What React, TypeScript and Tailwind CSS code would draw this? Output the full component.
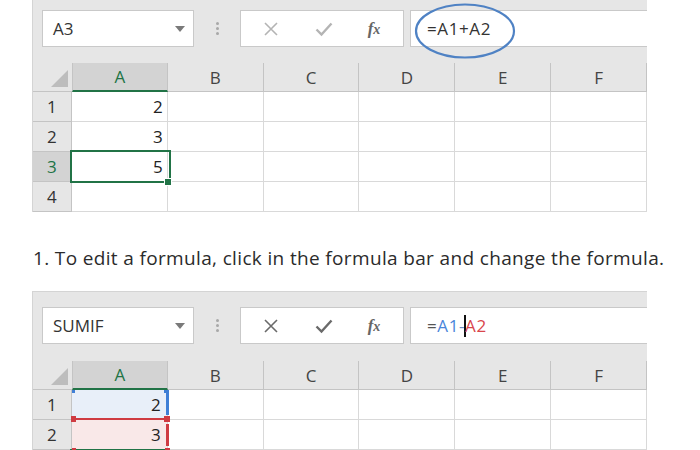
import React from "react";

const font = { fontFamily: '"Open Sans", "Noto Sans", sans-serif' };

function Toolbar({ name, active, formula }: { name: string; active: boolean; formula: React.ReactNode }) {
  const iconColor = active ? "#6a6a6a" : "#b4b4b4";
  return (
    <div className="flex h-[37px] items-stretch">
      <div className="ml-[9px] flex w-[152px] items-center justify-between border border-[#c9c9c9] bg-white pl-[10px] pr-[8px]">
        <span className="text-[17px] text-[#333]">{name}</span>
        <svg width="10" height="6" viewBox="0 0 10 6"><polygon points="0,0 10,0 5,6" fill="#7a7a7a" /></svg>
      </div>
      <div className="flex w-[46px] flex-col items-center justify-center gap-[2px]">
        <span className="h-[3px] w-[3px] rounded-full bg-[#a8a8a8]" />
        <span className="h-[3px] w-[3px] rounded-full bg-[#a8a8a8]" />
        <span className="h-[3px] w-[3px] rounded-full bg-[#a8a8a8]" />
      </div>
      <div className="flex w-[164px] items-center border border-[#c9c9c9] bg-white">
        <div className="flex w-[58px] justify-center pl-[2px]">
          <svg width="16" height="16" viewBox="0 0 16 16">
            <path d="M2 2 L14 14 M14 2 L2 14" stroke={iconColor} strokeWidth="1.6" fill="none" />
          </svg>
        </div>
        <div className="flex w-[50px] justify-center">
          <svg width="18" height="16" viewBox="0 0 18 16">
            <path d="M1.5 8.5 L6.5 13.5 L16.5 2.5" stroke={iconColor} strokeWidth="2.4" fill="none" />
          </svg>
        </div>
        <div className="flex flex-1 justify-center pr-[4px]">
          <span className="text-[17px] italic text-[#666]" style={{ fontFamily: '"Liberation Serif", "DejaVu Serif", serif', fontWeight: 700 }}>
            f<span className="text-[14px]">x</span>
          </span>
        </div>
      </div>
      <div className="relative ml-[6px] flex flex-1 items-center border-y border-l border-[#c9c9c9] bg-white pl-[16px]">
        {formula}
      </div>
    </div>
  );
}

const cols = ["A", "B", "C", "D", "E", "F"];

function HeaderRow() {
  return (
    <div className="flex h-[29px]">
      <div className="flex w-[39px] items-end justify-end border-b border-[#c4c4c4] pb-[4px] pr-[4px]">
        <svg width="17" height="17" viewBox="0 0 17 17"><polygon points="0,17 17,17 17,0" fill="#bdbdbd" /></svg>
      </div>
      {cols.map((c, i) => (
        <div
          key={c}
          className={
            i === 0
              ? "flex w-[96px] items-center justify-center border-b-2 border-b-[#217346] border-l border-l-[#c4c4c4] border-r border-r-[#c4c4c4] bg-[#d3d3d3] pt-[1px] text-[17px] text-[#217346]"
              : "flex w-[96px] items-center justify-center border-b border-b-[#c4c4c4] border-r border-r-[#c4c4c4] pt-[1px] text-[17px] text-[#444]"
          }
        >
          {c}
        </div>
      ))}
    </div>
  );
}

export default function App() {
  const rows1 = ["2", "3", "5", ""];
  return (
    <div className="relative h-[450px] w-[700px] overflow-hidden bg-white" style={font}>
      {/* Panel 1 */}
      <div className="ml-[32px] w-[615px] border-l border-[#d4d4d4] bg-[#e6e6e6] pt-[10px]">
        <Toolbar
          name="A3"
          active={false}
          formula={
            <>
              <span className="text-[17px] tracking-[0.6px] text-[#333]">=A1+A2</span>
              <svg className="pointer-events-none absolute left-[3px] top-[-9px]" width="102" height="58" viewBox="0 0 102 58">
                <ellipse cx="51" cy="29" rx="49" ry="26.5" fill="none" stroke="#4f82c4" strokeWidth="2.2" />
              </svg>
            </>
          }
        />
        <div className="mt-[16px]">
          <HeaderRow />
          {rows1.map((v, r) => (
            <div key={r} className="flex h-[30px]">
              <div
                className={
                  r === 2
                    ? "flex w-[39px] items-center justify-center border-b border-r border-[#c4c4c4] bg-[#d3d3d3] text-[17px] text-[#217346]"
                    : "flex w-[39px] items-center justify-center border-b border-r border-[#c4c4c4] text-[17px] text-[#333]"
                }
              >
                {r + 1}
              </div>
              {cols.map((c, i) => (
                <div key={c} className="relative flex w-[96px] items-center justify-end border-b border-r border-[#d9d9d9] bg-white pr-[4px] text-[17px] text-[#222]">
                  {i === 0 ? v : ""}
                  {i === 0 && r === 2 && (
                    <>
                      <div className="absolute left-[-2px] top-[-2px] z-10 h-[33px] w-[101px] border-2 border-[#217346]" />
                      <div className="absolute bottom-[-5px] right-[-5px] z-20 h-[8px] w-[8px] border border-white bg-[#217346]" />
                    </>
                  )}
                </div>
              ))}
            </div>
          ))}
        </div>
      </div>

      {/* Text */}
      <p className="ml-[33px] mt-[34px] h-[24px] text-[19px] leading-[24px] tracking-[0.35px] text-[#2b2b2b]">
        1. To edit a formula, click in the formula bar and change the formula.
      </p>

      {/* Panel 2 */}
      <div className="ml-[32px] mt-[21px] w-[615px] border-l border-t border-[#d4d4d4] bg-[#e6e6e6] pt-[15px]">
        <Toolbar
          name="SUMIF"
          active={true}
          formula={
            <span className="flex items-center text-[17px] tracking-[0.6px]">
              <span className="text-[#555]">=</span>
              <span className="text-[#4a86da]">A1</span>
              <span className="text-[#6a8cc0]">-</span>
              <span className="mx-[-1px] inline-block h-[22px] w-[2px] bg-[#111]" />
              <span className="text-[#d9464b]">A2</span>
            </span>
          }
        />
        <div className="mt-[17px]">
          <HeaderRow />
          {["2", "3"].map((v, r) => (
            <div key={r} className="flex h-[30px]">
              <div className="flex w-[39px] items-center justify-center border-b border-r border-[#c4c4c4] text-[17px] text-[#333]">
                {r + 1}
              </div>
              {cols.map((c, i) => (
                <div
                  key={c}
                  className={
                    i === 0
                      ? r === 0
                        ? "relative flex w-[96px] items-center justify-end border-b border-r border-[#d9d9d9] bg-[#e8eff9] pr-[6px] text-[17px] text-[#222]"
                        : "relative flex w-[96px] items-center justify-end border-b border-r border-[#d9d9d9] bg-[#f9e8e8] pr-[6px] text-[17px] text-[#222]"
                      : "flex w-[96px] items-center justify-end border-b border-r border-[#d9d9d9] bg-white pr-[4px] text-[17px] text-[#222]"
                  }
                >
                  {i === 0 ? v : ""}
                  {i === 0 && r === 0 && (
                    <>
                      <div className="absolute right-[-2px] top-[3px] z-10 h-[22px] w-[3px] bg-[#3f7fd6]" />
                      <div className="absolute left-[0px] top-[0px] z-10 h-[3px] w-[3px] bg-[#3f7fd6]" />
                      <div className="absolute right-[-2px] top-[0px] z-10 h-[3px] w-[5px] bg-[#3f7fd6]" />
                    </>
                  )}
                  {i === 0 && r === 1 && (
                    <>
                      <div className="absolute left-[0px] top-[-2px] z-10 h-[2px] w-[96px] bg-[#cf3b42]" />
                      <div className="absolute left-[-1px] top-[-4px] z-10 h-[6px] w-[5px] bg-[#cf3b42]" />
                      <div className="absolute right-[-3px] top-[-4px] z-10 h-[6px] w-[6px] bg-[#cf3b42]" />
                      <div className="absolute right-[-2px] top-[4px] z-10 h-[22px] w-[3px] bg-[#cf3b42]" />
                      <div className="absolute bottom-[-3px] left-[-2px] z-10 h-[3px] w-[100px] bg-[#217346]" />
                      <div className="absolute bottom-[-3px] left-[0px] z-20 h-[4px] w-[4px] bg-[#cf3b42]" />
                      <div className="absolute bottom-[-3px] right-[-3px] z-20 h-[4px] w-[5px] bg-[#cf3b42]" />
                    </>
                  )}
                </div>
              ))}
            </div>
          ))}
        </div>
      </div>
    </div>
  );
}
